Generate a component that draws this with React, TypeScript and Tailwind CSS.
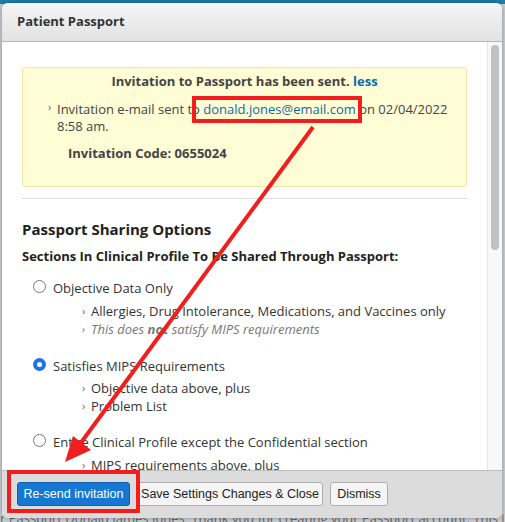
import React from 'react';

const Chevron: React.FC = () => (
  <span className="inline-block w-[8px] mr-[1px] text-[11px] text-[#666] leading-none align-[1px]">›</span>
);

const Radio: React.FC<{ checked?: boolean }> = ({ checked }) =>
  checked ? (
    <span className="w-[13px] h-[13px] rounded-full bg-[#1a73e8] flex items-center justify-center shrink-0">
      <span className="w-[5px] h-[5px] rounded-full bg-white" />
    </span>
  ) : (
    <span className="w-[13px] h-[13px] rounded-full border border-[#777] bg-white shrink-0" />
  );

const SubLine: React.FC<{ children: React.ReactNode; className?: string }> = ({ children, className = '' }) => (
  <div className={`pl-[60px] text-[13px] leading-[18px] ${className}`}>
    <Chevron />
    {children}
  </div>
);

const Option: React.FC<{ label: string; checked?: boolean; className?: string }> = ({ label, checked, className = '' }) => (
  <div className={`flex items-center pl-[11px] h-[20px] ${className}`}>
    <Radio checked={checked} />
    <span className="ml-[7px] text-[13px] leading-[20px] translate-y-[2px]">{label}</span>
  </div>
);

export default function App() {
  return (
    <div
      className="relative w-[505px] h-[522px] overflow-hidden bg-[#c9ccd2] text-[#333]"
      style={{ fontFamily: '"Open Sans", "Noto Sans", sans-serif' }}
    >
      {/* page behind the modal */}
      <div className="h-[4px] bg-[#1f7fa3]" />
      <div className="absolute left-0 top-[509px] whitespace-nowrap text-[13px] leading-[18px] text-[#666]">
        r Passport Donald James Jones, Thank you for creating your Passport account. This i
      </div>

      {/* modal */}
      <div className="absolute left-[2px] top-[3px] w-[500px] h-[515px] rounded-[6px] overflow-hidden flex flex-col bg-white shadow-[0_0_4px_rgba(0,0,0,0.35)]">
        <div className="h-[39px] shrink-0 flex items-center pl-[15px] bg-gradient-to-b from-[#f6f6f6] to-[#e2e2e2] border-b border-[#b5b5b5]">
          <span className="text-[13px] font-bold text-[#333]">Patient Passport</span>
        </div>

        <div className="flex-1 flex min-h-0">
          <div className="flex-1 overflow-hidden pl-[20px] pr-[20px]">
            <div className="mt-[25px] h-[120px] border border-[#f3e3a5] rounded-[3px] bg-[#fffdd5] pt-[3px]">
              <div className="text-center text-[13px] font-bold leading-[20px] text-[#444]">
                Invitation to Passport has been sent. <span className="text-[#1068a8]">less</span>
              </div>
              <div className="mt-[10px] pl-[25px] text-[13px] leading-[17px] text-[#444]">
                <div className="flex">
                  <Chevron />
                  <div>
                    Invitation e-mail sent to <span className="text-[#1068a8]">donald.jones@email.com</span> on 02/04/2022
                    <br />
                    8:58 am.
                  </div>
                </div>
              </div>
              <div className="mt-[10px] pl-[45px] text-[13px] font-bold leading-[17px] text-[#444]">
                Invitation Code: 0655024
              </div>
            </div>

            <div className="mt-[11px] border-t border-[#dcdcdc]" />

            <div className="mt-[19px] text-[15px] font-bold leading-[22px] text-[#222]">Passport Sharing Options</div>
            <div className="mt-[7px] text-[13px] font-bold leading-[18px] text-[#222]">
              Sections In Clinical Profile To Be Shared Through Passport:
            </div>

            <Option className="mt-[11px]" label="Objective Data Only" />
            <SubLine className="mt-[6px]">Allergies, Drug Intolerance, Medications, and Vaccines only</SubLine>
            <SubLine className="italic text-[#777]">
              This does <span className="font-bold">not</span> satisfy MIPS requirements
            </SubLine>

            <Option className="mt-[16px]" checked label="Satisfies MIPS Requirements" />
            <SubLine className="mt-[5px]">Objective data above, plus</SubLine>
            <SubLine>Problem List</SubLine>

            <Option className="mt-[15px]" label="Entire Clinical Profile except the Confidential section" />
            <SubLine className="mt-[6px]">MIPS requirements above, plus</SubLine>
          </div>

          {/* scrollbar */}
          <div className="w-[15px] shrink-0 bg-[#f8f8f8] border-l border-[#e4e4e4] pt-[3px] flex justify-center">
            <div className="w-[8px] h-[205px] rounded-full bg-[#c1c1c1]" />
          </div>
        </div>

        <div
          className="h-[48px] shrink-0 bg-[#dcdcdc] border-t border-[#bdbdbd] flex items-center gap-[7px] pl-[15px] pb-[1px]"
          style={{ fontFamily: '"Liberation Sans", Arial, sans-serif' }}
        >
          <button className="h-[24px] w-[113px] rounded-[3px] bg-[#1677d2] border border-[#0d5fae] text-white text-[12.5px]">
            Re-send invitation
          </button>
          <button className="h-[24px] w-[186px] rounded-[3px] bg-[#f5f5f5] border border-[#adadad] text-[#222] text-[12.5px]">
            Save Settings Changes &amp; Close
          </button>
          <button className="h-[24px] w-[58px] rounded-[3px] bg-[#f5f5f5] border border-[#adadad] text-[#222] text-[12.5px]">
            Dismiss
          </button>
        </div>
      </div>

      {/* red annotations */}
      <svg className="absolute inset-0 pointer-events-none" width="505" height="522" viewBox="0 0 505 522">
        <rect x="194" y="98" width="166" height="23" fill="none" stroke="#f21d1d" strokeWidth="4" />
        <rect x="9" y="472" width="129" height="39" fill="none" stroke="#f21d1d" strokeWidth="4" />
        <line x1="313" y1="127" x2="80" y2="444" stroke="#f21d1d" strokeWidth="4" />
        <polygon points="65,462 91,450 73,436" fill="#f21d1d" />
      </svg>
    </div>
  );
}
